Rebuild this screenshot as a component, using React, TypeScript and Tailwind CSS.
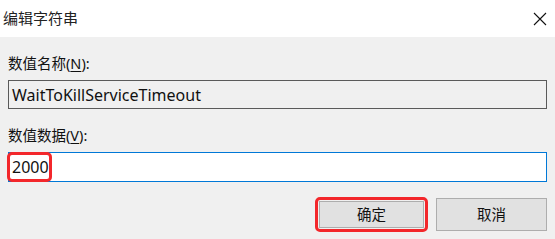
import React from "react"

// Windows "编辑字符串" registry string editor dialog

const FONT = '"Noto Sans", "Noto Sans CJK SC", sans-serif'

function CloseIcon() {
  return (
    <svg width="14" height="14" viewBox="0 0 14 14" className="block">
      <path d="M1 1 L13 13 M13 1 L1 13" stroke="#111" strokeWidth="1.1" fill="none" />
    </svg>
  )
}

export default function App() {
  return (
    <div
      className="flex h-[239px] w-[555px] flex-col bg-[#f0f0f0] text-[#111]"
      style={{ fontFamily: FONT }}
    >
      {/* Title bar */}
      <div className="flex h-[37px] shrink-0 items-center justify-between bg-white pl-[3px] pr-[8px]">
        <span className="text-[15px] leading-none text-[#222]">编辑字符串</span>
        <CloseIcon />
      </div>

      {/* Body */}
      <div className="flex flex-col px-[8px]">
        <label className="mt-[16px] h-[20px] text-[14.5px] leading-[20px] text-[#111]">
          数值名称(<span className="underline underline-offset-2">N</span>):
        </label>
        <div className="mt-[7px] flex h-[29px] items-center border border-[#5a5a5a] bg-[#f0f0f0] pl-[3px] text-[16px]">
          WaitToKillServiceTimeout
        </div>

        <label className="mt-[16px] h-[20px] text-[14.5px] leading-[20px] text-[#111]">
          数值数据(<span className="underline underline-offset-2">V</span>):
        </label>
        <div className="relative mt-[7px] flex h-[30px] items-center border border-[#0078d7] bg-white pl-[3px] text-[16px]">
          2000
          <div className="absolute left-[-2px] top-[-1px] h-[30px] w-[45px] rounded-[5px] border-[3px] border-[#f3272b]" />
        </div>

        {/* Buttons */}
        <div className="mt-[15px] flex items-center justify-end gap-[8px]">
          <div className="rounded-[5px] border-[3px] border-[#f3272b] p-px">
            <button className="flex h-[27px] w-[105px] items-center justify-center border border-[#adadad] bg-[#e1e1e1] text-[14.5px]">
              确定
            </button>
          </div>
          <button className="flex h-[33px] w-[111px] items-center justify-center border border-[#adadad] bg-[#e1e1e1] text-[14.5px]">
            取消
          </button>
        </div>
      </div>
    </div>
  )
}
